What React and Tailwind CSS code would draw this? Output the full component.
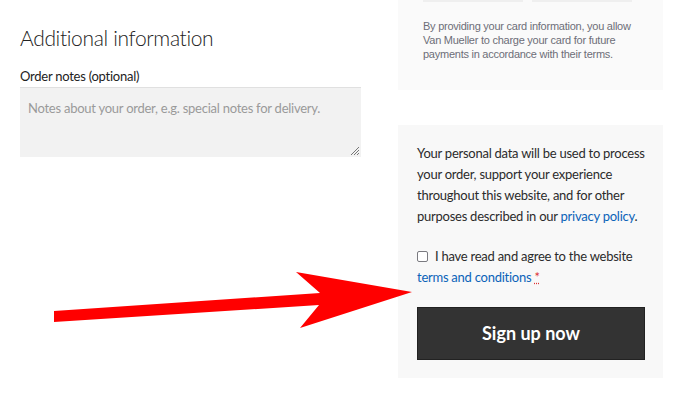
import React from 'react';

const Arrow = () => (
    <svg className="absolute left-0 top-0 pointer-events-none" width="700" height="415" viewBox="0 0 700 415">
        <polygon
            points="54,311 320,293 296,272 412,292 300,328 319,305 54,322"
            fill="#ff0000"
        />
    </svg>
);

const App = () => {
    return (
        <div className="relative w-[700px] h-[415px] overflow-hidden bg-white font-['Lato',sans-serif] text-[#333]">
            <div className="flex pl-5">
                {/* Additional information */}
                <div className="w-[341px] pt-[24px]">
                    <h3 className="text-[21px] leading-[28px] font-light tracking-[-0.35px] text-[#222]">Additional information</h3>
                    <label className="block mt-[15px] text-[13px] leading-[18px] tracking-[-0.25px] text-[#222]">Order notes (optional)</label>
                    <div className="relative mt-[2px] h-[70px] bg-[#f2f2f2] border-t border-[#e0e0e0] px-2 pt-[7px]">
                        <span className="whitespace-nowrap text-[13px] leading-[18px] tracking-[-0.25px] text-[#9a9a9a]">Notes about your order, e.g. special notes for delivery.</span>
                        <svg className="absolute right-[1px] bottom-[1px]" width="10" height="10" viewBox="0 0 10 10">
                            <path d="M9 1L1 9M9 4L4 9M9 7L7 9" stroke="#777" strokeWidth="1" />
                        </svg>
                    </div>
                </div>

                {/* Payment and terms */}
                <div className="ml-[37px] w-[265px] flex flex-col gap-[35px]">
                    <div className="h-[90px] bg-[#fafafa] px-[25px]">
                        <div className="flex gap-[9px]">
                            <div className="w-[100px] h-[2px] bg-[#efefef]"></div>
                            <div className="w-[100px] h-[2px] bg-[#efefef]"></div>
                        </div>
                        <p className="mt-[17px] whitespace-nowrap text-[11px] leading-[14px] tracking-[-0.25px] text-[#6d6e78] font-['Liberation_Sans',sans-serif]">
                            By providing your card information, you allow<br />
                            Van Mueller to charge your card for future<br />
                            payments in accordance with their terms.
                        </p>
                    </div>

                    <div className="h-[253px] bg-[#f8f8f8] px-[19px] pt-[18px]">
                        <p className="whitespace-nowrap text-[13px] leading-[21px] tracking-[-0.25px] text-[#2b2b2b]">
                            Your personal data will be used to process<br />
                            your order, support your experience<br />
                            throughout this website, and for other<br />
                            purposes described in our <a className="text-[#0b63b8]">privacy policy</a>.
                        </p>
                        <p className="mt-[19px] whitespace-nowrap text-[13px] leading-[21px] tracking-[-0.25px] text-[#2b2b2b]">
                            <span className="inline-block align-[-1px] w-[11px] h-[11px] border border-[#7a7a80] rounded-[2px] bg-white mr-[7px]"></span>
                            I have read and agree to the website<br />
                            <a className="text-[#0b63b8]">terms and conditions</a> <span className="text-[#d33] underline decoration-dotted">*</span>
                        </p>
                        <button className="mt-[19px] w-[228px] h-[53px] bg-[#333] border border-[#222] text-white text-[18px] font-bold">
                            Sign up now
                        </button>
                    </div>
                </div>
            </div>
            <Arrow />
        </div>
    );
};

export default App;
